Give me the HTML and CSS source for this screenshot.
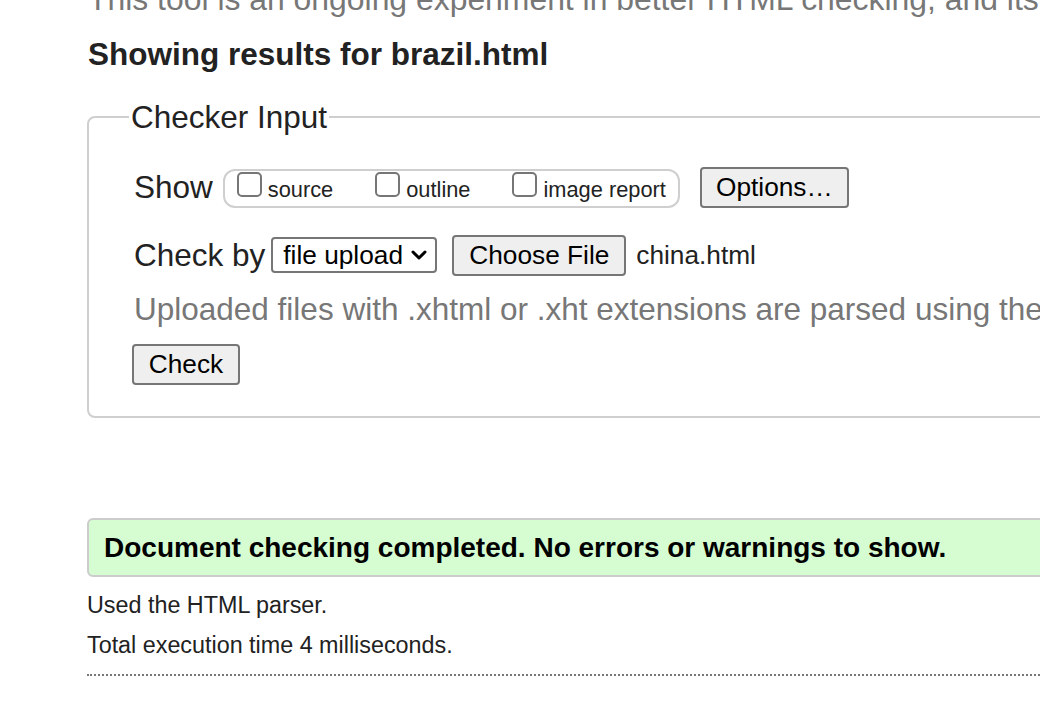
FILE: index.html
```html
<!DOCTYPE html>
<html lang="en">
<head>
<meta charset="utf-8">
<title>Showing results for brazil.html - Nu Html Checker</title>
<link rel="stylesheet" href="styles.css">
</head>
<body>
<div class="page">
  <p class="intro">This tool is an ongoing experiment in better HTML checking, and its</p>
  <h2 class="title">Showing results for brazil.html</h2>
  <form class="checker">
    <fieldset class="input-box">
      <legend class="legend">Checker Input</legend>
      <div class="row row-show">
        <span class="row-label">Show</span>
        <span class="show-group">
          <label class="opt"><span class="cb"></span>source</label>
          <label class="opt"><span class="cb"></span>outline</label>
          <label class="opt"><span class="cb"></span>image report</label>
        </span>
        <span class="btn btn-options">Options…</span>
      </div>
      <div class="row row-check">
        <span class="row-label">Check by</span>
        <span class="select">file upload<svg class="chev" width="16" height="12" viewBox="0 0 16 12"><path d="M2 3 L8 9 L14 3" fill="none" stroke="#000" stroke-width="3" stroke-linecap="round" stroke-linejoin="round"/></svg></span>
        <span class="btn btn-file">Choose File</span>
        <span class="filename">china.html</span>
      </div>
      <p class="note">Uploaded files with .xhtml or .xht extensions are parsed using the XML parser.</p>
      <div class="check-row"><span class="btn btn-check">Check</span></div>
    </fieldset>
  </form>
  <div class="result">Document checking completed. No errors or warnings to show.</div>
  <p class="details first">Used the HTML parser.</p>
  <p class="details">Total execution time 4 milliseconds.</p>
  <hr class="rule">
</div>
</body>
</html>
```

FILE: styles.css
```css
html, body {
  margin: 0;
  padding: 0;
  overflow: hidden;
  background: #fff;
}
body {
  font-family: "Liberation Sans", Arial, sans-serif;
  color: #222;
}
.page {
  width: 1400px;
  padding-left: 87px;
}
.intro {
  margin: -19px 0 0 1px;
  font-size: 31.9px;
  line-height: 36px;
  color: #777;
  white-space: nowrap;
}
.title {
  margin: 19px 0 0 1px;
  font-size: 31.5px;
  line-height: 36px;
  font-weight: bold;
  color: #222;
}
.checker {
  margin: 27px 0 0 0;
}
.input-box {
  margin: 0;
  border: 2px solid #cfcfcf;
  border-radius: 8px;
  padding: 0 0 31px 45px;
  min-width: 0;
}
.legend {
  margin-left: -5px;
  padding: 0 2px;
  font-size: 31.5px;
  line-height: 36px;
  color: #222;
}
.row {
  display: flex;
  align-items: center;
  font-size: 31.5px;
  white-space: nowrap;
}
.row-show {
  margin-top: 31px;
  height: 42px;
}
.row-check {
  margin-top: 26px;
  height: 42px;
}
.row-label {
  line-height: 36px;
  color: #222;
}
.show-group {
  display: inline-flex;
  align-items: flex-end;
  box-sizing: border-box;
  height: 39px;
  margin: 2px 0 0 10px;
  padding: 0 12px 6px 12px;
  border: 2px solid #cfcfcf;
  border-radius: 12px;
  gap: 42px;
}
.opt {
  display: inline-flex;
  align-items: flex-end;
  font-size: 21.8px;
  line-height: 21px;
  color: #222;
}
.cb {
  display: inline-block;
  box-sizing: border-box;
  width: 25px;
  height: 25px;
  margin: 0 6px 3px 0;
  border: 2px solid #767676;
  border-radius: 5px;
  background: #fff;
}
.btn {
  display: inline-flex;
  align-items: center;
  justify-content: center;
  box-sizing: border-box;
  height: 41px;
  padding: 0 15px;
  border: 2px solid #767676;
  border-radius: 4px;
  background: #efefef;
  font-size: 26.25px;
  color: #000;
}
.btn-options {
  margin: 0 0 0 20px;
  width: 149px;
}
.select {
  display: inline-flex;
  align-items: center;
  justify-content: space-between;
  box-sizing: border-box;
  width: 166px;
  height: 36px;
  margin-left: 6px;
  padding: 0 8px 0 10px;
  border: 2px solid #767676;
  border-radius: 4px;
  background: #fff;
  font-size: 26.25px;
  color: #000;
}
.chev {
  display: block;
}
.btn-file {
  margin-left: 15px;
  width: 174px;
}
.filename {
  margin-left: 10px;
  font-size: 26.25px;
  color: #222;
}
.note {
  margin: 15px 0 0 0;
  font-size: 31.5px;
  line-height: 36px;
  color: #777;
  white-space: nowrap;
}
.check-row {
  display: flex;
  margin: 17px 0 0 -2px;
}
.btn-check {
  width: 108px;
  height: 41px;
}
.result {
  margin-top: 100px;
  box-sizing: border-box;
  height: 59px;
  padding-left: 15px;
  display: flex;
  align-items: center;
  border: 2px solid #cccccc;
  border-radius: 6px;
  background: #d6fcd2;
  font-size: 28px;
  font-weight: bold;
  color: #000;
}
.details {
  margin: 0;
  font-size: 23.33px;
  line-height: 40px;
  color: #222;
}
.details.first {
  margin-top: 8px;
}
.rule {
  margin: 9px 0 0 0;
  border: 0;
  border-top: 2px dotted #777;
  height: 0;
}
```
